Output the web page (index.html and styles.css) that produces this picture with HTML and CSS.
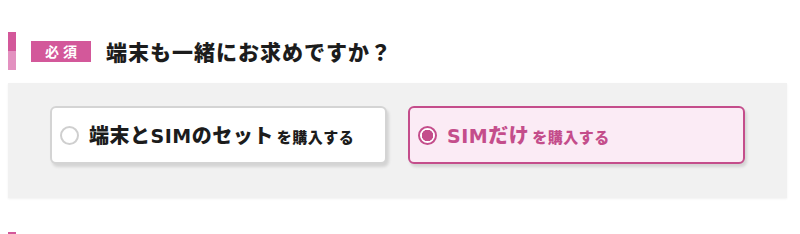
FILE: index.html
```html
<!DOCTYPE html>
<html lang="ja">
<head>
  <meta charset="UTF-8">
  <meta name="viewport" content="width=device-width, initial-scale=1.0">
  <title>端末も一緒にお求めですか？</title>
  <link rel="stylesheet" href="styles.css">
</head>
<body>
  <main>
    <section class="question">
      <h2 class="q-head">
        <span class="badge">必須</span>
        <span class="q-title">端末も一緒にお求めですか？</span>
      </h2>
      <form action="#" class="choices">
        <label class="choice">
          <input type="radio" name="device" value="set">
          <span class="mark"></span>
          <span class="choice-text">端末と<span class="latin">SIM</span>のセット<small>を購入する</small></span>
        </label>
        <label class="choice">
          <input type="radio" name="device" value="sim" checked>
          <span class="mark"></span>
          <span class="choice-text"><span class="latin">SIM</span>だけ<small>を購入する</small></span>
        </label>
      </form>
    </section>

    <section class="question">
      <h2 class="q-head"></h2>
    </section>
  </main>
</body>
</html>
```

FILE: styles.css
```css
:root {
  --clr-pink: #d3589a;
  --clr-pink-light: #e391c0;
  --clr-pink-dark: #c44d8b;
  --clr-pink-bg: #fbebf5;
  --clr-grey: #f1f1f1;
  --clr-text: #1c1c1c;
}

* {
  padding: 0;
  margin: 0;
  box-sizing: border-box;
}

html {
  font-family: "Noto Sans CJK JP", "Noto Sans", sans-serif;
  line-height: 1;
}

body {
  background-color: #fff;
  color: var(--clr-text);
  padding: 32px 13px 0 8px;
}

.question {
  margin-bottom: 34px;
}

.q-head {
  display: flex;
  align-items: center;
  height: 38px;
  padding-left: 15px;
  border-left: 8px solid transparent;
  border-image: linear-gradient(var(--clr-pink) 50%, var(--clr-pink-light) 50%) 1;
  margin-bottom: 13px;
}

.badge {
  display: flex;
  justify-content: center;
  align-items: center;
  width: 60px;
  height: 21px;
  background-color: var(--clr-pink);
  color: #fff;
  font-size: 14px;
  font-weight: 700;
  letter-spacing: 4px;
  padding-left: 4px;
  margin-right: 15px;
}

.q-title {
  font-size: 21px;
  font-weight: 900;
  letter-spacing: 1px;
}

.choices {
  display: grid;
  grid-template-columns: 337px 337px;
  gap: 21px;
  background-color: var(--clr-grey);
  padding: 23px 42px 34px;
  box-shadow: 0 1px 2px rgba(0, 0, 0, .06);
}

.choice {
  display: flex;
  align-items: center;
  height: 58px;
  padding-left: 8px;
  background-color: #fff;
  border: 2px solid #d4d4d4;
  border-radius: 6px;
  box-shadow: 2px 3px 3px rgba(0, 0, 0, .12);
  cursor: pointer;
}

.choice input {
  display: none;
}

.mark {
  width: 19px;
  height: 19px;
  border: 2px solid #cfcfcf;
  border-radius: 50%;
  background-color: #fff;
  margin-right: 10px;
  flex-shrink: 0;
}

.choice-text {
  font-size: 20px;
  font-weight: 900;
  letter-spacing: .5px;
}

.choice-text .latin {
  font-family: "DejaVu Sans", sans-serif;
  font-weight: 700;
  font-size: 19px;
}

.choice-text small {
  font-size: 15px;
  margin-left: 3px;
}

.choice:has(input:checked) {
  background-color: var(--clr-pink-bg);
  border-color: var(--clr-pink-dark);
  color: var(--clr-pink-dark);
}

.choice:has(input:checked) .mark {
  border: 2px solid var(--clr-pink-dark);
  background: radial-gradient(circle, var(--clr-pink-dark) 0 5.5px, #fff 6px);
}
```
